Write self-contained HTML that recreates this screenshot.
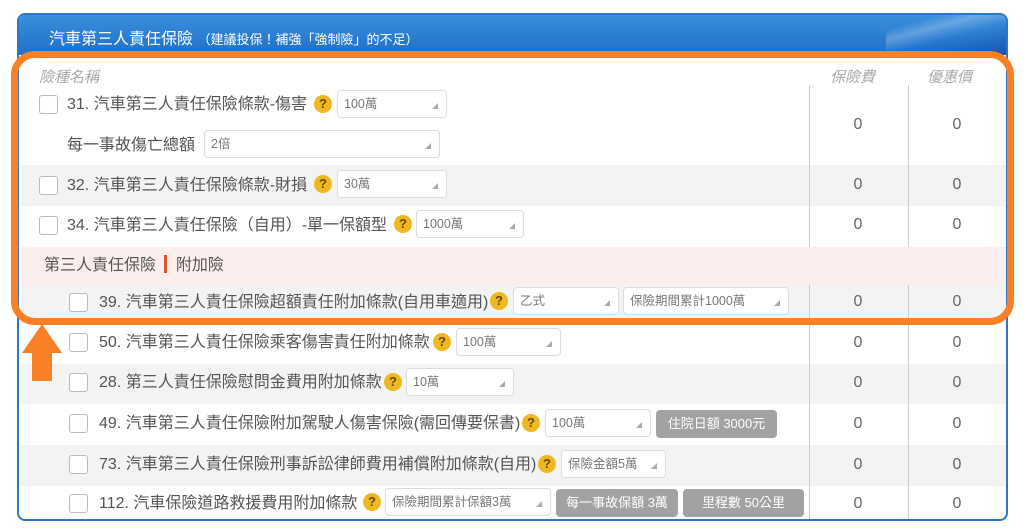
<!DOCTYPE html>
<html><head><meta charset="utf-8"><style>
*{box-sizing:border-box;margin:0;padding:0}
body{width:1024px;height:528px;background:#fff;font-family:"Liberation Sans","Noto Sans CJK TC",sans-serif;position:relative;overflow:hidden;color:#555}
.panel{position:absolute;left:17px;top:13px;width:991px;height:508px;border:2px solid #2c78c8;border-radius:8px;overflow:hidden;background:#fff}
.hdr{position:absolute;left:0;top:0;right:0;height:40px;background:linear-gradient(#3a8fdc,#1f6fc8);}
.hdr .gl{position:absolute;right:0;top:0;width:120px;height:40px;background:linear-gradient(165deg,rgba(255,255,255,0) 20%,rgba(255,255,255,.25) 35%,rgba(255,255,255,0) 55%,rgba(10,50,160,.45));}
.ttl{position:absolute;left:30px;top:10px;color:#fff;font-size:16px}
.ttl small{font-size:13px}
.row{position:absolute;left:2px;width:985px}
.g{background:#f3f3f3}
.p{background:#fdeeee}
.a{position:absolute;font-size:16px;white-space:nowrap;color:#555;transform:translateY(-3px)}
.cb{position:absolute;width:19px;height:19px;border:1.5px solid #bbb;border-radius:3px;background:#fff}
.q{position:absolute;width:18px;height:18px;border-radius:50%;background:#f0b820;color:#6a4a00;font-size:13px;font-weight:bold;text-align:center;line-height:18px}
.s{position:absolute;height:28px;border:1px solid #ddd;border-radius:4px;background:#fff;font-size:12.5px;color:#777;padding-left:6px;line-height:26px}
.s:after{content:"";position:absolute;right:8px;bottom:8px;border-left:6px solid transparent;border-bottom:6px solid #aaa}
.b{position:absolute;height:28px;border-radius:4px;background:#a2a2a2;color:#fff;font-size:13px;text-align:center;line-height:28px}
.n{position:absolute;font-size:16px;color:#666;width:40px;text-align:center;transform:translateY(1px)}
.vl{position:absolute;width:1px;background:#ccc}
</style></head><body>
<div class="panel">
<div class="hdr"><div class="gl"></div><div class="ttl">汽車第三人責任保險 <small>（建議投保！補強「強制險」的不足）</small></div></div>
<div class="row g" style="top:150px;height:41px"></div>
<div class="row p" style="top:232px;height:38px"></div>
<div class="row g" style="top:270px;height:38px"></div>
<div class="row g" style="top:349px;height:40px"></div>
<div class="row g" style="top:430px;height:41px"></div>
<div class="vl" style="left:790px;top:70px;height:162px"></div>
<div class="vl" style="left:889px;top:70px;height:162px"></div>
<div class="vl" style="left:790px;top:270px;height:240px"></div>
<div class="vl" style="left:889px;top:270px;height:240px"></div>
</div>
<div style="position:absolute;left:39px;top:66px;font-size:15px;font-style:italic;color:#aaa">險種名稱</div>
<div style="position:absolute;left:830px;top:66px;font-size:15px;font-style:italic;color:#aaa">保險費</div>
<div style="position:absolute;left:927px;top:66px;font-size:15px;font-style:italic;color:#aaa">優惠價</div>

<div class="cb" style="left:39px;top:95px"></div><div class="a" style="left:67px;top:93px">31. 汽車第三人責任保險條款-傷害</div><div class="q" style="left:314px;top:95px">?</div><div class="s" style="left:337px;top:90px;width:110px">100萬</div>
<div class="a" style="left:67px;top:134px">每一事故傷亡總額</div><div class="s" style="left:204px;top:130px;width:236px">2倍</div>
<div class="cb" style="left:39px;top:176px"></div><div class="a" style="left:67px;top:174px">32. 汽車第三人責任保險條款-財損</div><div class="q" style="left:314px;top:175px">?</div><div class="s" style="left:337px;top:170px;width:110px">30萬</div>
<div class="cb" style="left:39px;top:216px"></div><div class="a" style="left:67px;top:214px">34. 汽車第三人責任保險（自用）-單一保額型</div><div class="q" style="left:394px;top:215px">?</div><div class="s" style="left:416px;top:210px;width:108px">1000萬</div>
<div class="a" style="left:44px;top:254px">第三人責任保險 <span style="display:inline-block;width:3px;height:18px;background:#e0502a;vertical-align:-3px;margin:0 4px"></span> 附加險</div>
<div class="cb" style="left:69px;top:293px"></div><div class="a" style="left:99px;top:291px">39. 汽車第三人責任保險超額責任附加條款(自用車適用)</div><div class="q" style="left:490px;top:292px">?</div><div class="s" style="left:513px;top:287px;width:106px">乙式</div><div class="s" style="left:623px;top:287px;width:166px">保險期間累計1000萬</div>
<div class="cb" style="left:69px;top:333px"></div><div class="a" style="left:99px;top:331px">50. 汽車第三人責任保險乘客傷害責任附加條款</div><div class="q" style="left:433px;top:333px">?</div><div class="s" style="left:456px;top:328px;width:105px">100萬</div>
<div class="cb" style="left:69px;top:373px"></div><div class="a" style="left:99px;top:371px">28. 第三人責任保險慰問金費用附加條款</div><div class="q" style="left:384px;top:373px">?</div><div class="s" style="left:406px;top:368px;width:108px">10萬</div>
<div class="cb" style="left:69px;top:414px"></div><div class="a" style="left:99px;top:412px">49. 汽車第三人責任保險附加駕駛人傷害保險(需回傳要保書)</div><div class="q" style="left:522px;top:414px">?</div><div class="s" style="left:545px;top:409px;width:106px">100萬</div><div class="b" style="left:656px;top:410px;width:121px">住院日額 3000元</div>
<div class="cb" style="left:69px;top:455px"></div><div class="a" style="left:99px;top:453px">73. 汽車第三人責任保險刑事訴訟律師費用補償附加條款(自用)</div><div class="q" style="left:538px;top:455px">?</div><div class="s" style="left:561px;top:450px;width:105px">保險金額5萬</div>
<div class="cb" style="left:69px;top:494px"></div><div class="a" style="left:99px;top:492px">112. 汽車保險道路救援費用附加條款</div><div class="q" style="left:363px;top:493px">?</div><div class="s" style="left:385px;top:488px;width:166px">保險期間累計保額3萬</div><div class="b" style="left:556px;top:489px;width:122px">每一事故保額 3萬</div><div class="b" style="left:683px;top:489px;width:121px">里程數 50公里</div>

<div class="n" style="left:838px;top:115px">0</div><div class="n" style="left:937px;top:115px">0</div>
<div class="n" style="left:838px;top:175px">0</div><div class="n" style="left:937px;top:175px">0</div>
<div class="n" style="left:838px;top:215px">0</div><div class="n" style="left:937px;top:215px">0</div>
<div class="n" style="left:838px;top:292px">0</div><div class="n" style="left:937px;top:292px">0</div>
<div class="n" style="left:838px;top:333px">0</div><div class="n" style="left:937px;top:333px">0</div>
<div class="n" style="left:838px;top:373px">0</div><div class="n" style="left:937px;top:373px">0</div>
<div class="n" style="left:838px;top:414px">0</div><div class="n" style="left:937px;top:414px">0</div>
<div class="n" style="left:838px;top:455px">0</div><div class="n" style="left:937px;top:455px">0</div>
<div class="n" style="left:838px;top:494px">0</div><div class="n" style="left:937px;top:494px">0</div>

<div style="position:absolute;left:11px;top:51px;width:1003px;height:274px;border:7px solid #fa8025;border-radius:24px"></div>
<svg style="position:absolute;left:0;top:0" width="80" height="400"><polygon points="42,324 62,353 52,353 52,381 32,381 32,353 22,353" fill="#fa8025"/></svg>
</body></html>
